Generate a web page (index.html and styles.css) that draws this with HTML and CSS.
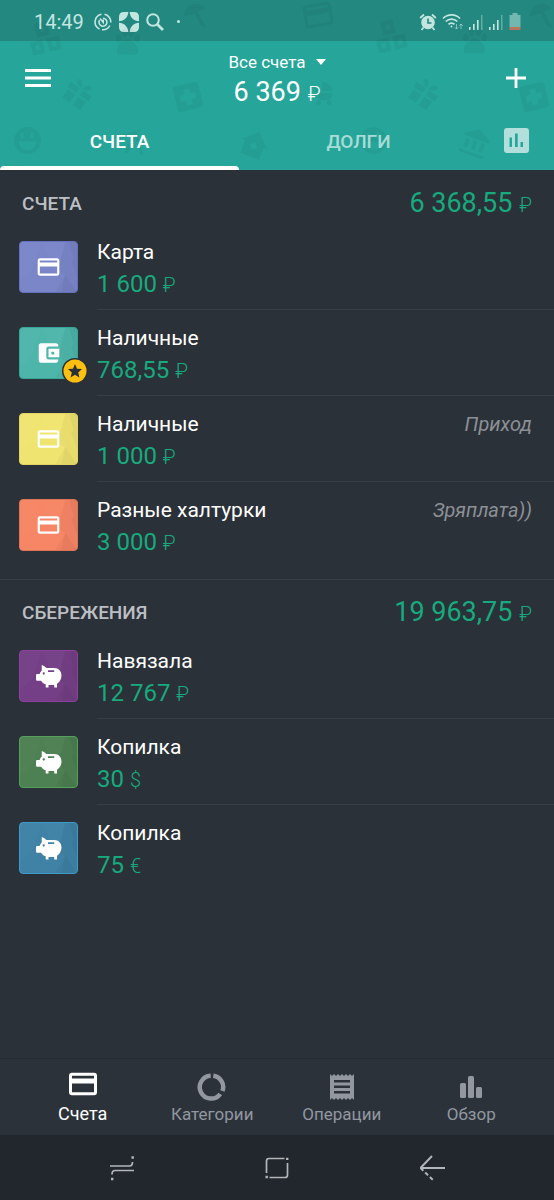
FILE: index.html
```html
<!DOCTYPE html>
<html lang="ru">
<head>
<meta charset="utf-8">
<meta name="viewport" content="width=device-width, initial-scale=1">
<title>Счета</title>
<link rel="stylesheet" href="styles.css">
</head>
<body>
<svg class="sprite" aria-hidden="true">
  <symbol id="card" viewBox="0 0 24 24"><path fill="currentColor" d="M20 4H4c-1.100 0-2 .9-2 2v12c0 1.100.9 2 2 2h16c1.100 0 2-.9 2-2V6c0-1.100-.9-2-2-2zm0 14H4v-6.500h16V18zm0-10.200H4V6h16v1.800z"/></symbol>
  <symbol id="wallet" viewBox="0 0 24 24"><path fill="currentColor" d="M21 18v1c0 1.100-.9 2-2 2H5c-1.100 0-2-.9-2-2V5c0-1.100.9-2 2-2h14c1.100 0 2 .9 2 2v1h-9c-1.100 0-2 .9-2 2v8c0 1.100.9 2 2 2h9zm-9-2h10V8H12v8zm4-2.500c-.8 0-1.500-.7-1.500-1.500s.7-1.500 1.500-1.500 1.500.7 1.500 1.500-.7 1.500-1.500 1.500z"/></symbol>
  <symbol id="pig" viewBox="0 0 26 24"><path fill="currentColor" fill-rule="evenodd" d="M6.500 1.500Q8.500 2 11 4.300h7.500c4.300 0 7 3.200 7 7.200 0 3.500-1.600 6.300-4.300 7.900V23h-2.700v-2.300h-5.500V23h-2.700v-3.100c-2.400-.6-3.600-2-4.400-3.400H2q-1 0-1-1V11q0-1 1-1h2.500c.4-1.400 1.200-2.400 2-3.200zM12.500 6.500v1.600h6V6.500zM8.400 8.500a1 1 0 1 0 .1 0z"/></symbol>
  <symbol id="facets" viewBox="0 0 58 52" preserveAspectRatio="none"><path fill="#fff" opacity=".02" d="M0 0h22L12 30 0 40zM22 0l24 0-8 34z"/><path fill="#000" opacity=".03" d="M46 0h12v52H42l4-18-8-4z"/><path fill="#000" opacity=".03" d="M50 0h8v30zM36 52l10-18 12 18zM52 20l6-8v24z"/></symbol>
  <symbol id="p-gift" viewBox="0 0 32 32"><g transform="rotate(35 16 16)"><path d="M3 10h11v6H3zM18 10h11v6H18zM5 18h9v10H5zM18 18h9v10h-9z"/><path d="M15 9C5 9 7 0 12 3c2 1 3 4 3 6zM17 9c10 0 8-9 3-6-2 1-3 4-3 6z"/></g></symbol>
  <symbol id="p-cross" viewBox="0 0 32 32"><path fill-rule="evenodd" transform="rotate(-14 16 16)" d="M5 3h22l2 2v22l-2 2H5l-2-2V5zm8 5v5H8v6h5v5h6v-5h5v-6h-5V8z"/></symbol>
  <symbol id="p-smile" viewBox="0 0 32 32"><path fill-rule="evenodd" d="M16 2a14 14 0 1 0 .1 0zM7 17h18c-1 12-17 12-18 0zM9 8h3v6H9zm10 0h3v6h-3z"/></symbol>
  <symbol id="p-blocks" viewBox="0 0 36 32"><path fill-rule="evenodd" transform="rotate(-14 18 16)" d="M12 1h12v13H12zM4 17h12v13H4zM20 17h12v13H20zM16 5v5h4V5zM8 21v5h4v-5zM24 21v5h4v-5z"/></symbol>
  <symbol id="p-paw" viewBox="0 0 32 32"><path d="M16 13c5 0 12 7 11 13-1 4-6 2-11 2s-10 2-11-2c-1-6 6-13 11-13zM7 8a3 4 0 1 0 .1 0zM13 2a3 4 0 1 0 .1 0zM20 2a3 4 0 1 0 .1 0zM26 8a3 4 0 1 0 .1 0z"/></symbol>
  <symbol id="p-umbrella" viewBox="0 0 32 32"><path d="M2 16C3 2 18-2 27 7L18 11l7 14 3 2-2 2-4-2-7-14z"/></symbol>
  <symbol id="p-house" viewBox="0 0 32 32"><path fill-rule="evenodd" transform="rotate(22 16 16)" d="M16 2 30 15h-4v13H6V15H2zm0 11-4 4 4 4 4-4z"/></symbol>
  <symbol id="p-bank" viewBox="0 0 32 32"><path transform="rotate(20 16 16)" d="M16 2 29 9v3H3V9zM6 14h4v9H6zM14 14h4v9h-4zM22 14h4v9h-4zM3 26h26v3H3z"/></symbol>
  <symbol id="p-stroller" viewBox="0 0 32 32"><path d="M16 3c8 0 12 6 12 11H16zM6 10l3-1 4 7h15c0 5-3 8-7 8h-8zM12 24a3 3 0 1 0 .1 0zM24 24a3 3 0 1 0 .1 0z"/></symbol>
  <symbol id="p-swing" viewBox="0 0 32 32"><path d="M3 8 26 1v3l-3 1 6 23-3 1-5-17-9 15-3-1L17 8 4 11z"/></symbol>
</svg>

<div class="app">
  <header class="top">
    <svg class="doodles" aria-hidden="true">
      <use href="#p-blocks" x="25" y="21" width="38" height="34"/>
      <use href="#p-paw" x="112" y="27" width="31" height="31"/>
      <use href="#p-umbrella" x="182" y="1" width="28" height="30"/>
      <use href="#p-gift" x="62" y="78" width="32" height="32"/>
      <use href="#p-cross" x="172" y="81" width="32" height="32"/>
      <use href="#p-smile" x="12" y="125" width="31" height="31"/>
      <use href="#p-swing" x="116" y="127" width="30" height="32"/>
      <use href="#p-house" x="238" y="129" width="32" height="32"/>
      <use href="#card" x="301" y="-2" width="34" height="34" transform="rotate(-10 318 15)"/>
      <use href="#p-stroller" x="308" y="78" width="28" height="30"/>
      <use href="#p-blocks" x="371" y="19" width="38" height="34"/>
      <use href="#p-paw" x="459" y="26" width="31" height="31"/>
      <use href="#p-umbrella" x="528" y="1" width="28" height="30"/>
      <use href="#p-gift" x="408" y="78" width="32" height="32"/>
      <use href="#p-cross" x="518" y="81" width="32" height="32"/>
      <use href="#p-smile" x="358" y="125" width="31" height="31"/>
      <use href="#p-bank" x="459" y="127" width="32" height="32"/>
    </svg>

    <div class="status">
      <div class="status-side">
        <span class="clock">14:49</span>
        <svg width="18" height="18" viewBox="0 0 18 18" fill="none" stroke="currentColor" stroke-width="1.600"><path d="M10.500 1.300a7.800 7.800 0 0 1 6.300 8.200M15.800 12.500A7.800 7.800 0 0 1 8 16.700M5.500 16A7.800 7.800 0 0 1 7.500 1.300"/><path d="M9 5.200A4 4 0 1 1 5.500 7.200M6 5.500l3.200 3.800V6.500"/></svg>
        <svg width="20" height="20" viewBox="0 0 20 20"><path fill="currentColor" d="M5 0h4.300c0 5-4.300 9.300-9.300 9.300V5Q0 0 5 0zM10.700 0H15q5 0 5 5v4.300c-5 0-9.300-4.300-9.300-9.300zM0 10.700c5 0 9.300 4.300 9.300 9.300H5q-5 0-5-5zM20 10.700V15q0 5-5 5h-4.300c0-5 4.300-9.300 9.300-9.300z"/></svg>
        <svg width="18" height="18" viewBox="0 0 18 18" fill="none" stroke="currentColor" stroke-width="2"><circle cx="7" cy="7" r="5.800"/><path stroke-width="2.600" d="m11 11 6 6"/></svg>
        <span class="dot"></span>
      </div>
      <div class="status-side status-right">
        <svg width="18" height="18" viewBox="0 0 18 18" fill="none" stroke="currentColor"><circle cx="9" cy="9.500" r="6.800" fill="currentColor" stroke="none"/><path stroke-width="1.800" d="M1.200 5 5 1.500M16.800 5 13 1.500M4.500 14.500l-2 2.500M13.500 14.500l2 2.500"/><path stroke="#21877d" stroke-width="1.600" d="M9 5.500V10h3.500"/></svg>
        <svg width="22" height="18" viewBox="0 0 22 18" fill="none" stroke="currentColor" stroke-width="1.700"><path d="M1 5.500a12 12 0 0 1 17 0M3.800 8.500a8 8 0 0 1 11.500 0M6.500 11.300a4.200 4.200 0 0 1 6 0"/><circle cx="9.500" cy="13.500" r="1" fill="currentColor" stroke="none"/><path stroke-width="1" opacity=".6" d="M14.500 11v5m-1.700-1.700 1.700 1.700 1.700-1.700M19 16v-5m-1.700 1.700L19 11l1.700 1.700"/></svg>
        <svg width="15" height="16" viewBox="0 0 15 16"><path fill="currentColor" d="M0 13h1.600v3H0zM4 10h1.600v6H4zM8 6h1.600v10H8z"/><path fill="currentColor" opacity=".4" d="M12 1h1.500v15H12z"/></svg>
        <svg width="15" height="16" viewBox="0 0 15 16"><path fill="currentColor" d="M0 13h1.600v3H0zM4 10h1.600v6H4zM8 6h1.600v10H8z"/><path fill="currentColor" opacity=".4" d="M12 1h1.500v15H12z"/></svg>
        <svg width="12" height="18" viewBox="0 0 12 18"><path fill="currentColor" opacity=".5" d="M.5 2h3V0h5v2h3v12H.5z"/><path fill="#b9765c" d="M.5 14h11v3H.5z"/></svg>
      </div>
    </div>

    <div class="bar">
      <button class="icon-btn" aria-label="Меню"><svg width="26" height="18" viewBox="0 0 26 18"><path fill="currentColor" d="M0 0h26v3H0zM0 7.500h26v3H0zM0 15h26v3H0z"/></svg></button>
      <div class="total">
        <button class="picker">Все счета <svg width="10" height="6" viewBox="0 0 10 6"><path fill="currentColor" d="M0 0h10L5 6z"/></svg></button>
        <div class="total-sum">6 369 <span class="cur">₽</span></div>
      </div>
      <button class="icon-btn" aria-label="Добавить"><svg width="20" height="20" viewBox="0 0 20 20"><path fill="currentColor" d="M8.600 0h2.800v8.600H20v2.800h-8.600V20H8.600v-8.600H0V8.600h8.600z"/></svg></button>
    </div>

    <nav class="tabs">
      <button class="tab active">СЧЕТА</button>
      <button class="tab">ДОЛГИ</button>
      <button class="tab-chart" aria-label="Диаграмма"><svg width="25" height="25" viewBox="0 0 25 25"><path fill="currentColor" fill-rule="evenodd" d="M3 0h19q3 0 3 3v19q0 3-3 3H3q-3 0-3-3V3q0-3 3-3zM5.500 9.500V19H8V9.500zM11 5.500V19h2.700V5.500zM16.500 14v5H19v-5z"/></svg></button>
    </nav>
  </header>

  <main class="content">
    <section class="group">
      <div class="group-head"><h2>СЧЕТА</h2><div class="group-sum">6 368,55 <span class="cur">₽</span></div></div>
      <ul class="list">
        <li class="account">
          <div class="thumb indigo"><svg class="facets"><use href="#facets"/></svg><svg class="glyph"><use href="#card"/></svg></div>
          <div class="info"><div class="text"><div class="name">Карта</div><div class="sum">1 600 <span class="cur">₽</span></div></div></div>
        </li>
        <li class="account">
          <div class="thumb teal"><svg class="facets"><use href="#facets"/></svg><svg class="glyph"><use href="#wallet"/></svg>
            <svg class="star" viewBox="0 0 26 26"><circle cx="13" cy="13" r="13" fill="#2b3138"/><circle cx="13" cy="13" r="11.500" fill="#fdc010"/><path fill="#2b3138" d="m13 6 2 4.700 5 .4-3.800 3.300 1.200 5L13 16.700l-4.400 2.700 1.200-5L6 11.100l5-.4z"/></svg>
          </div>
          <div class="info"><div class="text"><div class="name">Наличные</div><div class="sum">768,55 <span class="cur">₽</span></div></div></div>
        </li>
        <li class="account">
          <div class="thumb yellow"><svg class="facets"><use href="#facets"/></svg><svg class="glyph"><use href="#card"/></svg></div>
          <div class="info"><div class="text"><div class="name">Наличные</div><div class="sum">1 000 <span class="cur">₽</span></div></div><div class="note">Приход</div></div>
        </li>
        <li class="account">
          <div class="thumb orange"><svg class="facets"><use href="#facets"/></svg><svg class="glyph"><use href="#card"/></svg></div>
          <div class="info"><div class="text"><div class="name">Разные халтурки</div><div class="sum">3 000 <span class="cur">₽</span></div></div><div class="note">Зряплата))</div></div>
        </li>
      </ul>
    </section>

    <section class="group">
      <div class="group-head"><h2>СБЕРЕЖЕНИЯ</h2><div class="group-sum">19 963,75 <span class="cur">₽</span></div></div>
      <ul class="list">
        <li class="account">
          <div class="thumb purple"><svg class="facets"><use href="#facets"/></svg><svg class="glyph"><use href="#pig"/></svg></div>
          <div class="info"><div class="text"><div class="name">Навязала</div><div class="sum">12 767 <span class="cur">₽</span></div></div></div>
        </li>
        <li class="account">
          <div class="thumb green"><svg class="facets"><use href="#facets"/></svg><svg class="glyph"><use href="#pig"/></svg></div>
          <div class="info"><div class="text"><div class="name">Копилка</div><div class="sum">30 <span class="cur">$</span></div></div></div>
        </li>
        <li class="account">
          <div class="thumb blue"><svg class="facets"><use href="#facets"/></svg><svg class="glyph"><use href="#pig"/></svg></div>
          <div class="info"><div class="text"><div class="name">Копилка</div><div class="sum">75 <span class="cur">€</span></div></div></div>
        </li>
      </ul>
    </section>
  </main>

  <nav class="bottom">
    <button class="nav-item active"><svg width="32" height="32" viewBox="0 0 32 32" fill="none" stroke="currentColor"><rect x="3.500" y="5.300" width="25" height="19.500" rx="1.500" stroke-width="3"/><path stroke-width="5" d="M3 12h26"/></svg>Счета</button>
    <button class="nav-item"><svg width="32" height="32" viewBox="0 0 32 32" fill="none" stroke="currentColor" stroke-width="4.500"><path d="M17.300 6.800A11.400 11.400 0 0 1 26.500 22M24.300 25A11.400 11.400 0 1 1 14.700 6.800"/></svg>Категории</button>
    <button class="nav-item"><svg width="32" height="32" viewBox="0 0 32 32"><path fill="currentColor" fill-rule="evenodd" d="m4 5 2 2 2-2 2 2 2-2 2 2 2-2 2 2 2-2 2 2 2-2 2 2 2-2v26l-2-2-2 2-2-2-2 2-2-2-2 2-2-2-2 2-2-2-2 2-2-2-2 2zm4 6v2.500h16V11zm0 5.500V19h16v-2.500zM8 22v2.500h16V22z"/></svg>Операции</button>
    <button class="nav-item"><svg width="32" height="32" viewBox="0 0 32 32" fill="currentColor"><rect x="5" y="14" width="6" height="15" rx="1.500"/><rect x="13" y="7" width="6" height="22" rx="1.500"/><rect x="21" y="18" width="6" height="11" rx="1.500"/></svg>Обзор</button>
  </nav>

  <div class="system">
    <button class="sys-btn" aria-label="Недавние"><svg width="26" height="26" viewBox="0 0 26 26" fill="none" stroke="currentColor" stroke-width="1.700"><path d="M1 11h19.500q3 0 3-4M25 15.500H6q-3 0-3 4"/><path stroke-width="2.400" d="M22.500 2.500h2.400M2 24h2.400"/></svg></button>
    <button class="sys-btn" aria-label="Домой"><svg width="26" height="26" viewBox="0 0 26 26" fill="none" stroke="currentColor" stroke-width="1.700"><path d="M20.500 3.500H5Q2.500 3.500 2.500 6v12M5.500 22.500H21q2.500 0 2.500-2.500V8"/><path stroke-width="2.400" d="M22 3.900h2.400M1.500 22h2.400"/></svg></button>
    <button class="sys-btn" aria-label="Назад"><svg width="26" height="26" viewBox="0 0 26 26" fill="none" stroke="currentColor" stroke-width="1.900"><path d="M26 13H1M13 1 1.500 13"/><path stroke-dasharray="4 2.500" d="M1.500 13 15 26"/></svg></button>
  </div>
</div>
</body>
</html>
```
FILE: styles.css
```css
* { box-sizing: border-box; }

body {
  margin: 0;
  background: #2b3138;
  color: #fff;
  font-family: Roboto, "Noto Sans", sans-serif;
}

button {
  padding: 0;
  border: 0;
  background: none;
  color: inherit;
  font: inherit;
  cursor: pointer;
}

svg { flex: none; display: block; }

.sprite { position: absolute; width: 0; height: 0; }

.app { display: flex; flex-direction: column; min-height: 100vh; }

/* Header */
.top { position: relative; background: #26a69a; }

.doodles {
  position: absolute;
  inset: 0;
  width: 100%;
  height: 100%;
  color: #000;
  opacity: .04;
  pointer-events: none;
}

.status {
  display: flex;
  justify-content: space-between;
  align-items: center;
  height: 41px;
  padding: 2px 33px 0 34px;
  background: rgba(24, 60, 60, .28);
  color: #c4e6e1;
}

.status-side { display: flex; align-items: center; gap: 7px; }
.status-right { gap: 5px; }
.clock { font-size: 20px; line-height: 24px; margin-right: 3px; }
.dot { width: 3px; height: 3px; margin-left: 6px; border-radius: 50%; background: currentColor; }

.bar {
  position: relative;
  display: flex;
  justify-content: space-between;
  height: 72px;
}

.icon-btn { display: grid; place-items: center; width: 76px; height: 74px; }

.total { display: flex; flex-direction: column; align-items: center; padding-top: 9px; }
.picker { display: flex; align-items: center; gap: 10px; font-size: 17px; line-height: 24px; }
.total-sum { font-size: 27px; line-height: 36px; }
.cur { font-size: 20px; font-weight: 300; }

.tabs { position: relative; display: flex; height: 57px; color: #a8dcd7; }
.tab { position: relative; flex: 1; font-size: 19px; font-weight: 500; line-height: 24px; }
.tab.active { color: #fff; }
.tab.active::after {
  content: "";
  position: absolute;
  left: 0;
  right: 0;
  bottom: 0;
  height: 4px;
  border-radius: 4px 4px 0 0;
  background: #fff;
}
.tab-chart { display: grid; place-items: center; width: 76px; height: 54px; color: #b2dfdb; }

/* Account groups */
.content { flex: 1; padding-top: 1px; }

.group { padding-bottom: 11px; }
.group + .group { border-top: 1px solid #383e46; }

.group-head {
  display: flex;
  justify-content: space-between;
  align-items: center;
  height: 53px;
  padding: 12px 22px 0;
}
.group-head h2 { margin: 0; color: #bcbfc3; font-size: 19px; font-weight: 500; line-height: 24px; }
.group-sum { color: #17aa7e; font-size: 27px; line-height: 36px; }

.list { margin: 0; padding: 0; list-style: none; }

.account { display: flex; align-items: center; gap: 19px; height: 86px; padding-left: 19px; }

.thumb {
  position: relative;
  display: grid;
  place-items: center;
  width: 59px;
  height: 52px;
  border: 1px solid var(--edge);
  border-radius: 4px;
  background: var(--fill);
}
.facets { position: absolute; inset: 0; width: 100%; height: 100%; }
.glyph { position: relative; width: 27px; height: 26px; }
.star { position: absolute; right: -11px; bottom: -6px; width: 26px; height: 26px; }

.indigo { --fill: #7a86c8; --edge: #6470c0; }
.teal { --fill: #4eb5aa; --edge: #37a598; }
.yellow { --fill: #f0e470; --edge: #e2d561; }
.orange { --fill: #f68665; --edge: #dd7557; }
.purple { --fill: #743f86; --edge: #8e3f9f; }
.green { --fill: #4d8052; --edge: #55a05b; }
.blue { --fill: #3f82a6; --edge: #3d9ac9; }

.info {
  flex: 1;
  display: flex;
  justify-content: space-between;
  height: 86px;
  padding: 14px 22px 0 0;
  border-bottom: 1px solid #383e46;
}
.account:last-child .info { border-bottom-color: transparent; }

.name { font-size: 21px; line-height: 28px; }
.sum { color: #17aa7e; font-size: 24px; line-height: 36px; }
.note { color: #8c9096; font-size: 20px; font-style: italic; line-height: 28px; }

/* Bottom navigation */
.bottom {
  display: grid;
  grid-template-columns: repeat(4, 1fr);
  height: 77px;
  padding: 0 18px;
  border-top: 1px solid #272b31;
  background: #2c323a;
  color: #9297a0;
}
.nav-item {
  display: flex;
  flex-direction: column;
  align-items: center;
  padding-top: 10px;
  font-size: 17px;
  line-height: 26px;
}
.nav-item.active { color: #fff; font-size: 18px; }

.system {
  display: grid;
  grid-template-columns: repeat(3, 1fr);
  height: 65px;
  padding: 0 44px;
  background: #22262d;
  color: #b4b7ba;
}
.sys-btn { display: grid; place-items: center; }
```
